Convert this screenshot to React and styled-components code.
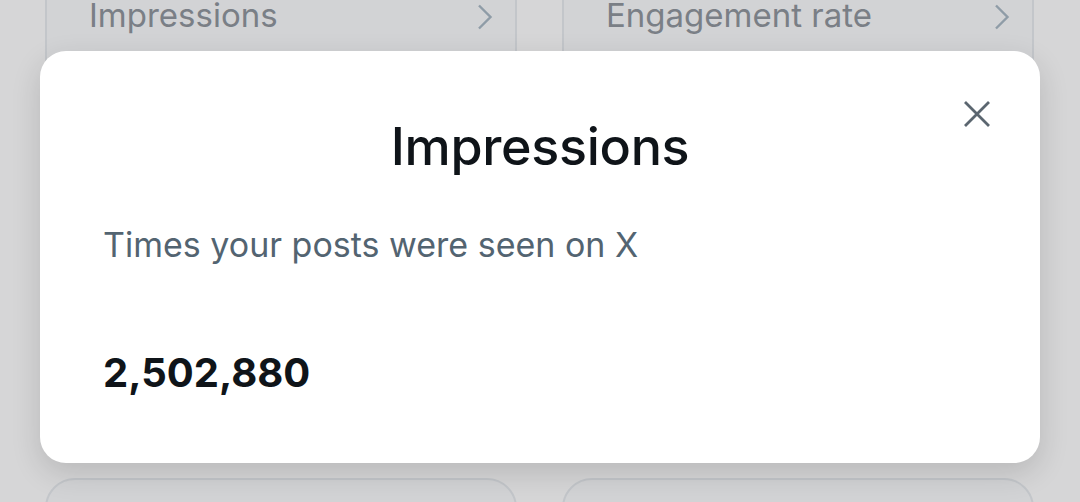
import React from "react";
import styled, { createGlobalStyle } from "styled-components";

const Global = createGlobalStyle`
  html, body { margin: 0; padding: 0; }
  body { background: #d6d6d7; font-family: Inter, "Noto Sans", sans-serif; overflow: hidden; }
`;

const Page = styled.div`
  position: relative;
  width: 1080px;
  height: 502px;
  overflow: hidden;
  background: #d6d6d7;
`;

const Grid = styled.div`
  display: grid;
  grid-template-columns: 472px 472px;
  grid-template-rows: 160px 100px;
  column-gap: 45px;
  row-gap: 370px;
  padding-left: 45px;
  margin-top: -52px;
`;

const StatCard = styled.div`
  box-sizing: border-box;
  border: 2px solid #c3c6ca;
  border-radius: 30px;
  background: #d2d3d5;
  display: flex;
  align-items: flex-start;
  justify-content: space-between;
  padding: 47px 22px 0 42px;
`;

const CardLabel = styled.span`
  font-size: 33px;
  color: #7a7f86;
  line-height: 36px;
`;

const Chevron = styled.svg`
  width: 16px;
  height: 26px;
  margin-top: 7px;
`;

const Dialog = styled.div`
  position: absolute;
  left: 40px;
  top: 51px;
  width: 1000px;
  height: 412px;
  box-sizing: border-box;
  background: #ffffff;
  border-radius: 26px;
  box-shadow: 0 10px 30px rgba(0, 0, 0, 0.14);
  padding: 62px 63px 0;
  display: flex;
  flex-direction: column;
`;

const Title = styled.h2`
  margin: 0;
  text-align: center;
  font-size: 52px;
  font-weight: 500;
  color: #0f1419;
  line-height: 68px;
  letter-spacing: -0.3px;
`;

const Description = styled.p`
  margin: 42px 0 0;
  font-size: 34px;
  font-weight: 400;
  color: #536471;
  line-height: 44px;
`;

const Value = styled.div`
  margin-top: 82px;
  font-size: 40px;
  font-weight: 700;
  color: #0f1419;
  line-height: 48px;
`;

const CloseButton = styled.button`
  position: absolute;
  top: 46px;
  right: 46px;
  width: 34px;
  height: 34px;
  padding: 0;
  border: none;
  background: transparent;
  display: flex;
  align-items: center;
  justify-content: center;
`;

const ChevronIcon = () => (
  <Chevron viewBox="0 0 16 26">
    <path d="M2 1.5 L13.5 13 L2 24.5" fill="none" stroke="#8f9ca7" strokeWidth="2.4" />
  </Chevron>
);

export default function App() {
  return (
    <Page>
      <Global />
      <Grid>
        <StatCard>
          <CardLabel>Impressions</CardLabel>
          <ChevronIcon />
        </StatCard>
        <StatCard>
          <CardLabel>Engagement rate</CardLabel>
          <ChevronIcon />
        </StatCard>
        <StatCard />
        <StatCard />
      </Grid>
      <Dialog role="dialog">
        <CloseButton aria-label="Close">
          <svg width="28" height="28" viewBox="0 0 28 28">
            <path d="M2 2 L26 26 M26 2 L2 26" stroke="#5b6670" strokeWidth="2.8" fill="none" />
          </svg>
        </CloseButton>
        <Title>Impressions</Title>
        <Description>Times your posts were seen on X</Description>
        <Value>2,502,880</Value>
      </Dialog>
    </Page>
  );
}
